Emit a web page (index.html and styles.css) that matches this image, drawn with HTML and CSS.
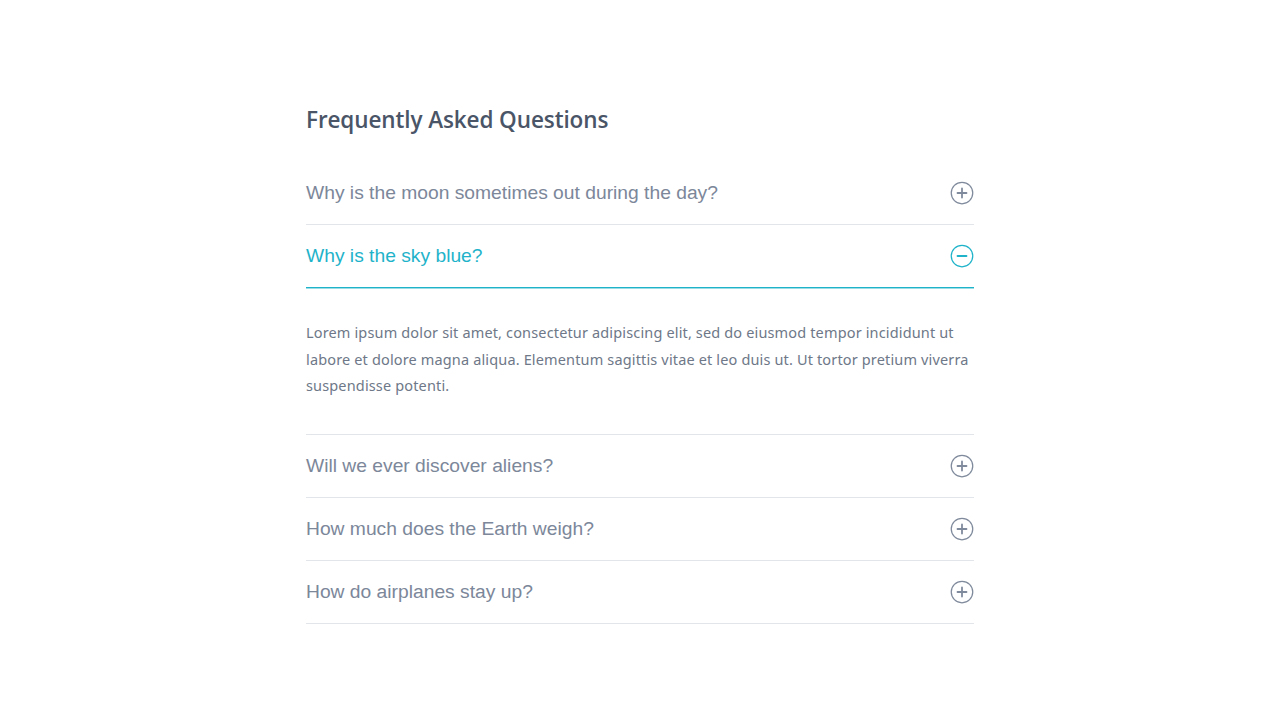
FILE: index.html
```html
<!DOCTYPE html>
<html lang="en">
<head>
<meta charset="utf-8">
<title>FAQ</title>
<link rel="stylesheet" href="styles.css">
</head>
<body>
<main class="faq">
  <h1 class="faq-title">Frequently Asked Questions</h1>
  <div class="faq-list">
    <div class="faq-item">
      <div class="faq-q">
        <span class="faq-q-text">Why is the moon sometimes out during the day?</span>
        <svg class="faq-icon" viewBox="0 0 24 24" width="24" height="24"><circle cx="12" cy="12" r="10.75" fill="none" stroke="currentColor" stroke-width="1.25"/><path d="M7.5 12h9M12 7.5v9" stroke="currentColor" stroke-width="1.8" stroke-linecap="round"/></svg>
      </div>
    </div>
    <div class="faq-item open">
      <div class="faq-q">
        <span class="faq-q-text">Why is the sky blue?</span>
        <svg class="faq-icon" viewBox="0 0 24 24" width="24" height="24"><circle cx="12" cy="12" r="10.75" fill="none" stroke="currentColor" stroke-width="1.25"/><path d="M7.5 12h9" stroke="currentColor" stroke-width="1.8" stroke-linecap="round"/></svg>
      </div>
      <div class="faq-a">
        <p>Lorem ipsum dolor sit amet, consectetur adipiscing elit, sed do eiusmod tempor incididunt ut labore et dolore magna aliqua. Elementum sagittis vitae et leo duis ut. Ut tortor pretium viverra suspendisse potenti.</p>
      </div>
    </div>
    <div class="faq-item">
      <div class="faq-q">
        <span class="faq-q-text">Will we ever discover aliens?</span>
        <svg class="faq-icon" viewBox="0 0 24 24" width="24" height="24"><circle cx="12" cy="12" r="10.75" fill="none" stroke="currentColor" stroke-width="1.25"/><path d="M7.5 12h9M12 7.5v9" stroke="currentColor" stroke-width="1.8" stroke-linecap="round"/></svg>
      </div>
    </div>
    <div class="faq-item">
      <div class="faq-q">
        <span class="faq-q-text">How much does the Earth weigh?</span>
        <svg class="faq-icon" viewBox="0 0 24 24" width="24" height="24"><circle cx="12" cy="12" r="10.75" fill="none" stroke="currentColor" stroke-width="1.25"/><path d="M7.5 12h9M12 7.5v9" stroke="currentColor" stroke-width="1.8" stroke-linecap="round"/></svg>
      </div>
    </div>
    <div class="faq-item">
      <div class="faq-q">
        <span class="faq-q-text">How do airplanes stay up?</span>
        <svg class="faq-icon" viewBox="0 0 24 24" width="24" height="24"><circle cx="12" cy="12" r="10.75" fill="none" stroke="currentColor" stroke-width="1.25"/><path d="M7.5 12h9M12 7.5v9" stroke="currentColor" stroke-width="1.8" stroke-linecap="round"/></svg>
      </div>
    </div>
  </div>
</main>
</body>
</html>
```

FILE: styles.css
```css
html, body {
  margin: 0;
  padding: 0;
  background: #ffffff;
}

.faq {
  width: 668px;
  margin: 0 auto;
  padding-top: 104px;
}

.faq-title {
  margin: 0 0 27px;
  font-family: "Open Sans", "Noto Sans", sans-serif;
  font-weight: 600;
  font-size: 22.5px;
  line-height: 31px;
  letter-spacing: -0.1px;
  color: #4a5568;
}

.faq-item {
  border-bottom: 1px solid #e2e5ea;
}

.faq-q {
  display: flex;
  align-items: center;
  justify-content: space-between;
  box-sizing: border-box;
  height: 62px;
  font-family: "Liberation Sans", Arial, sans-serif;
  font-size: 19.25px;
  color: #7c879a;
}

.faq-icon {
  color: #7f8a9c;
  flex: none;
}

.faq-item.open .faq-q {
  height: 63px;
  color: #1fb3ca;
  border-bottom: 1px solid #1fb3ca;
  box-shadow: 0 1px 0 rgba(31, 179, 202, 0.45);
}

.faq-item.open .faq-icon {
  color: #1fb3ca;
}

.faq-a {
  padding: 31px 0 35px;
}

.faq-a p {
  margin: 0;
  font-family: "Noto Sans", sans-serif;
  font-size: 14.5px;
  line-height: 26.5px;
  letter-spacing: 0.15px;
  color: #6e7888;
}
```
